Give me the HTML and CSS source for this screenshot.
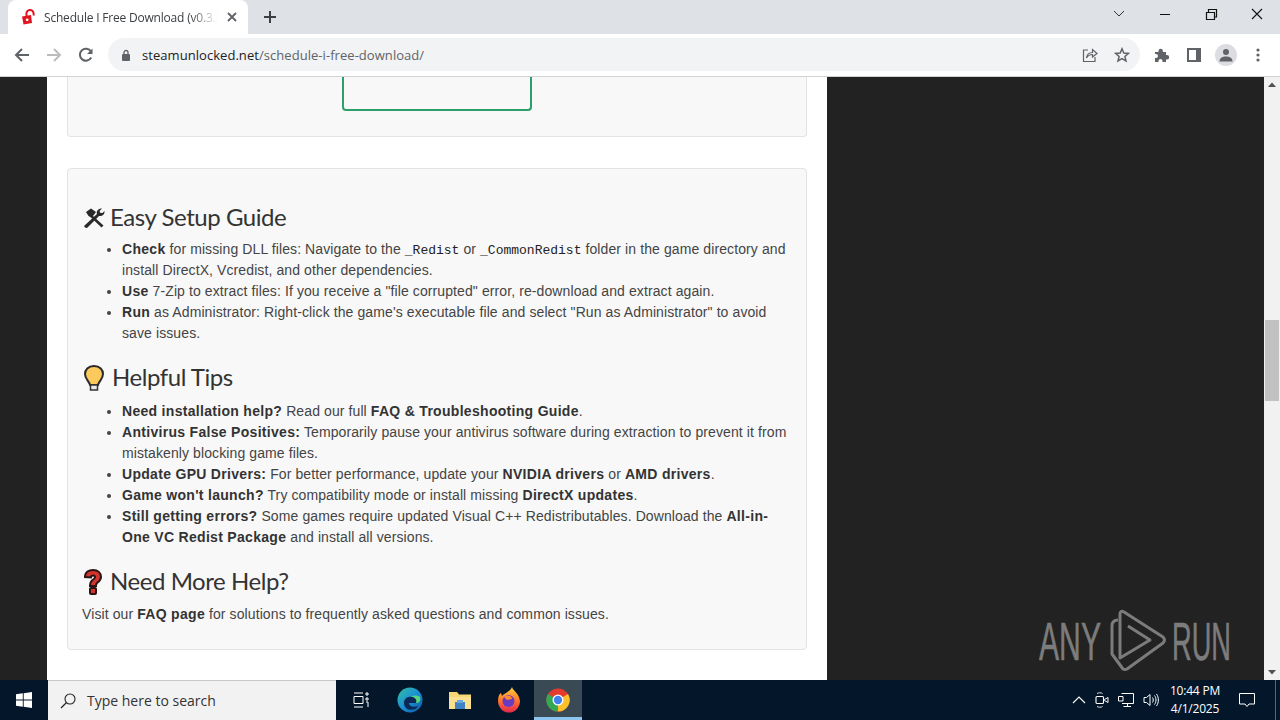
FILE: index.html
```html
<!DOCTYPE html>
<html lang="en">
<head>
<meta charset="utf-8">
<title>Schedule I Free Download</title>
<link rel="stylesheet" href="styles.css">
</head>
<body>
<div class="tabstrip">
  <div class="tab">
    <svg class="favicon" width="16" height="16" viewBox="0 0 16 16"><path d="M1 7.500 L10 6 L11 14 L2.500 15.500 Z" fill="#e0141c"/><path d="M5.500 7 V4.500 a3.500 3.200 0 0 1 7-.5 L12.800 6.500" fill="none" stroke="#e0141c" stroke-width="2"/><circle cx="6.200" cy="10.800" r="1.400" fill="#fff"/></svg>
    <span class="tab-title">Schedule I Free Download (v0.3.3</span>
    <svg class="tab-close" width="10" height="10" viewBox="0 0 10 10"><path d="M1 1 L9 9 M9 1 L1 9" stroke="#5f6368" stroke-width="1.800"/></svg>
  </div>
  <svg class="newtab" width="14" height="14" viewBox="0 0 14 14"><path d="M7 1 V13 M1 7 H13" stroke="#3c4043" stroke-width="2"/></svg>
  <div class="winctrls">
    <svg width="46" height="30" viewBox="0 0 46 30"><path d="M18 11 L23 16 L28 11" fill="none" stroke="#333" stroke-width="1"/></svg>
    <svg width="46" height="30" viewBox="0 0 46 30"><path d="M18 14.500 H28" stroke="#111" stroke-width="1"/></svg>
    <svg width="46" height="30" viewBox="0 0 46 30"><path d="M18.500 12.500 H26.500 V19.500 H18.500 Z M20.500 12 V9.500 H28.500 V17 H27" fill="none" stroke="#111" stroke-width="1.200"/></svg>
    <svg width="46" height="30" viewBox="0 0 46 30"><path d="M18 9 L28 19 M28 9 L18 19" stroke="#111" stroke-width="1.100"/></svg>
  </div>
</div>
<div class="toolbar">
  <svg class="nav" width="16" height="16" viewBox="0 0 16 16"><path d="M15 8 H2 M8 2 L2 8 L8 14" fill="none" stroke="#5f6368" stroke-width="2"/></svg>
  <svg class="nav" width="16" height="16" viewBox="0 0 16 16"><path d="M1 8 H14 M8 2 L14 8 L8 14" fill="none" stroke="#babcbe" stroke-width="2"/></svg>
  <svg class="nav" width="16" height="16" viewBox="0 0 16 16"><path d="M13.200 10.500 A6 6 0 1 1 13 4.500" fill="none" stroke="#5f6368" stroke-width="2"/><path d="M14.500 1.500 V7 H9 Z" fill="#5f6368"/></svg>
  <div class="omnibox">
    <svg class="lock" width="10" height="12" viewBox="0 0 10 12"><rect x="1" y="5" width="8" height="7" rx="1" fill="#5f6368"/><path d="M3 5.500 V3.500 a2 2 0 0 1 4 0 V5.500" fill="none" stroke="#5f6368" stroke-width="1.300"/></svg>
    <span class="url"><span class="host">steamunlocked.net</span>/schedule-i-free-download/</span>
    <svg class="omni-share" width="16" height="16" viewBox="0 0 16 16"><path d="M6 3 H1.500 V14.500 H13 V10" fill="none" stroke="#5f6368" stroke-width="1.200"/><path d="M4.500 11 C5 7 8 5.500 10.500 5.500 V2.500 L15 6.500 L10.500 10 V7.500 C8 7.500 6 8.500 4.500 11 Z" fill="none" stroke="#5f6368" stroke-width="1.200"/></svg>
    <svg class="omni-star" width="16" height="16" viewBox="0 0 16 16"><path d="M8 1.800 L9.800 6 L14.400 6.400 L10.900 9.400 L12 13.900 L8 11.500 L4 13.900 L5.100 9.400 L1.600 6.400 L6.200 6 Z" fill="none" stroke="#5f6368" stroke-width="1.500"/></svg>
  </div>
  <svg class="tool ext" width="16" height="16" viewBox="0 0 16 16"><path d="M1 5 H4.500 V4 a2.200 2.200 0 0 1 4.400 0 V5 H12 V8 H13 a2.200 2.200 0 0 1 0 4.400 H12 V15 H8.500 V14 a2 2 0 0 0-4 0 V15 H1 V11 H2 a2 2 0 0 0 0-4 H1 Z" fill="#5f6368"/></svg>
  <svg class="tool side" width="14" height="14" viewBox="0 0 14 14"><path d="M0 0 H14 V14 H0 Z M2 2 V12 H9 V2 Z" fill="#5f6368" fill-rule="evenodd"/></svg>
  <div class="avatar"><svg width="14" height="14" viewBox="0 0 14 14"><circle cx="7" cy="4" r="3" fill="#5f6368"/><path d="M0.500 13.500 C0.500 9.500 4 8.500 7 8.500 C10 8.500 13.500 9.500 13.500 13.500 Z" fill="#5f6368"/></svg></div>
  <svg class="tool menu" width="4" height="14" viewBox="0 0 4 14"><circle cx="2" cy="2" r="1.600" fill="#5f6368"/><circle cx="2" cy="7" r="1.600" fill="#5f6368"/><circle cx="2" cy="12" r="1.600" fill="#5f6368"/></svg>
</div>
<div class="viewport">
  <main class="page">
    <section class="card card-top"><div class="green-box"></div></section>
    <section class="card card-guide">
      <h3 class="h-setup"><svg class="emoji tools" width="23" height="22" viewBox="0 0 23 22"><path d="M4 5 L9 1.500 L14 5 L11 9 L21.500 18.500 L19.500 20.500 L9 10.500 L6.500 9 Z" fill="#2a2a2a"/><path d="M3 20.500 L2 19 L15 7 C14 4 16 1.500 20 1.500 L17.500 4 L18.500 6 L20.500 6 L22.500 4 C23 7.500 20 9.500 17 9 L5 21 Z" fill="#2a2a2a"/></svg>Easy Setup Guide</h3>
      <ul>
        <li><strong>Check</strong> for missing DLL files: Navigate to the <code>_Redist</code> or <code>_CommonRedist</code> folder in the game directory and install DirectX, Vcredist, and other dependencies.</li>
        <li><strong>Use</strong> 7-Zip to extract files: If you receive a "file corrupted" error, re-download and extract again.</li>
        <li><strong>Run</strong> as Administrator: Right-click the game's executable file and select "Run as Administrator" to avoid save issues.</li>
      </ul>
      <h3 class="h-tips"><svg class="emoji bulb" width="24" height="28" viewBox="0 0 24 28"><path d="M12 2 C6 2 3 6 3 10 C3 15 7 17 8 21 H16 C17 17 21 15 21 10 C21 6 18 2 12 2 Z" fill="#fcc95c" stroke="#2a2a2a" stroke-width="2"/><rect x="8.500" y="21" width="7" height="5" fill="#e8e8e8" stroke="#333" stroke-width="1.500"/></svg>Helpful Tips</h3>
      <ul>
        <li><strong>Need installation help?</strong> Read our full <strong>FAQ &amp; Troubleshooting Guide</strong>.</li>
        <li><strong>Antivirus False Positives:</strong> Temporarily pause your antivirus software during extraction to prevent it from mistakenly blocking game files.</li>
        <li><strong>Update GPU Drivers:</strong> For better performance, update your <strong>NVIDIA drivers</strong> or <strong>AMD drivers</strong>.</li>
        <li><strong>Game won't launch?</strong> Try compatibility mode or install missing <strong>DirectX updates</strong>.</li>
        <li><strong>Still getting errors?</strong> Some games require updated Visual C++ Redistributables. Download the <strong>All-in-One VC Redist Package</strong> and install all versions.</li>
      </ul>
      <h3 class="h-help"><svg class="emoji question" width="22" height="28" viewBox="0 0 22 28"><path d="M3 9 C3 4 7 2 11 2 C16 2 19 5 19 9 C19 12 17 13.500 15 15 C14 16 14 17 14 18 H8 C8 15.500 8.500 13.500 10.500 12 C12 11 13 10.500 13 9 C13 8 12 7.500 11 7.500 C10 7.500 9 8 9 9.500 Z" fill="#d3342c" stroke="#2a1414" stroke-width="2"/><rect x="8" y="20" width="6" height="6" rx="1" fill="#d3342c" stroke="#2a1414" stroke-width="2"/></svg>Need More Help?</h3>
      <p>Visit our <strong>FAQ page</strong> for solutions to frequently asked questions and common issues.</p>
    </section>
  </main>
  <div class="side-dark"></div>
  <div class="scrollbar">
    <svg class="sb-arrow" width="16" height="17" viewBox="0 0 16 17"><path d="M4 10 L8 5.500 L12 10 Z" fill="#505050"/></svg>
    <div class="sb-track"><div class="sb-thumb"></div></div>
    <svg class="sb-arrow" width="16" height="17" viewBox="0 0 16 17"><path d="M4 7 L8 11.500 L12 7 Z" fill="#505050"/></svg>
  </div>
  <svg class="watermark" width="194" height="66" viewBox="0 0 194 66">
    <text x="0" y="52" class="wm-text" textLength="62" lengthAdjust="spacingAndGlyphs">ANY</text>
    <path d="M79 12 Q73 12 73 18 V46 L84 61 Q86 62 88 61 L124 35 Q127 32 124 29 L85 4 Q81 2 81 6 V50 L111 32 L89 18" fill="none" stroke="#7c7c7c" stroke-width="3" stroke-linejoin="round"/>
    <text x="133" y="52" class="wm-text" textLength="59" lengthAdjust="spacingAndGlyphs">RUN</text>
  </svg>
</div>
<div class="taskbar">
  <div class="start"><svg width="16" height="16" viewBox="0 0 16 16"><path d="M0 2.300 L6.800 1.300 V7.500 H0 Z M7.700 1.200 L16 0 V7.500 H7.700 Z M0 8.400 H6.800 V14.700 L0 13.700 Z M7.700 8.400 H16 V16 L7.700 14.800 Z" fill="#fff"/></svg></div>
  <div class="search">
    <svg width="16" height="16" viewBox="0 0 16 16"><circle cx="10" cy="6" r="5" fill="none" stroke="#222" stroke-width="1.100"/><path d="M6.500 9.500 L1 15" stroke="#222" stroke-width="1.300"/></svg>
    <span>Type here to search</span>
  </div>
  <div class="tb-item"><svg width="16" height="16" viewBox="0 0 16 16"><path d="M1 1 H10 M1 15 H10 M1 4.500 H10 V11.500 H1 Z M13 1 H15 V3 H13 Z M13 6 H15 V8 H13 Z M13 10 H15 V15" fill="none" stroke="#fff" stroke-width="1"/></svg></div>
  <div class="tb-item"><svg width="26" height="26" viewBox="0 0 26 26"><defs><linearGradient id="edge" x1="0" y1="0" x2="1" y2="1"><stop offset="0" stop-color="#35c1a0"/><stop offset=".5" stop-color="#1b8fd6"/><stop offset="1" stop-color="#0c59a4"/></linearGradient></defs><circle cx="13" cy="13" r="12.500" fill="url(#edge)"/><path d="M7 16 C7 10 13 8.500 17 10.500 C20 12 20.500 15 19 16 H12 C12 19 16 21 21 19 C18 25 7 24 7 16 Z" fill="#0a2a55"/><path d="M23 10 C24 14 22 16 19 16 C20.500 13 18 10 14 9.500 C17 8 21 8 23 10 Z" fill="#57d57a"/></svg></div>
  <div class="tb-item"><svg width="24" height="22" viewBox="0 0 24 22"><path d="M1 3 H9 L11 5.500 H23 V20 H1 Z" fill="#f8d775"/><path d="M1 8 H23 V20 H1 Z" fill="#fbe08f"/><rect x="7" y="13" width="10" height="7" fill="#3f83c4"/><rect x="9" y="11" width="6" height="3" fill="#6aa9dc"/></svg></div>
  <div class="tb-item"><svg width="24" height="26" viewBox="0 0 24 26"><defs><linearGradient id="fox" x1="0" y1="0" x2="0" y2="1"><stop offset="0" stop-color="#ffd23c"/><stop offset=".5" stop-color="#ff7a2a"/><stop offset="1" stop-color="#e22850"/></linearGradient></defs><path d="M15 0 C16 4 22 6 23 14 A11 11.500 0 1 1 1 14 C1 10 2 7 4 6 L5 9 C7 6 13 5 15 0 Z" fill="url(#fox)"/><circle cx="11.500" cy="14" r="6" fill="#6a3bc0"/><path d="M7 10 C10 7 15 9 15 12 L10 13 Z" fill="#ff8a2a"/></svg></div>
  <div class="tb-item active"><svg width="24" height="24" viewBox="0 0 24 24"><circle cx="12" cy="12" r="11.500" fill="#e33b2e"/><path d="M12 12 L22 6 A11.500 11.500 0 0 1 12 23.500 Z" fill="#fbc02d"/><path d="M12 12 L12 23.500 A11.500 11.500 0 0 1 2 6 Z" fill="#34a853"/><circle cx="12" cy="12" r="5.500" fill="#fff"/><circle cx="12" cy="12" r="4.200" fill="#3f82f0"/></svg></div>
  <div class="tray">
    <svg width="14" height="14" viewBox="0 0 14 14"><path d="M1 10 L7 4 L13 10" fill="none" stroke="#fff" stroke-width="1.100"/></svg>
    <svg width="14" height="16" viewBox="0 0 14 16"><path d="M2 1.500 C3.500 .5 6 .5 7.500 1.500 M2 14.500 C3.500 15.500 6 15.500 7.500 14.500" fill="none" stroke="#ddd" stroke-width="1"/><rect x="1" y="4.500" width="7.500" height="7" rx="1" fill="none" stroke="#fff" stroke-width="1.100"/><path d="M9.500 7.500 L13 5.500 V10.500 L9.500 8.500 Z" fill="none" stroke="#fff"/></svg>
    <svg width="16" height="16" viewBox="0 0 16 16"><path d="M3.500 1.500 H15.500 V11.500 H4 M9.500 11.500 V14.500 M5.500 14.500 H13 M.5 4.500 H5 V9 H.5 Z" fill="none" stroke="#fff" stroke-width="1"/></svg>
    <svg width="16" height="16" viewBox="0 0 16 16"><path d="M1 5.500 H3.500 L7 2.500 V13.500 L3.500 10.500 H1 Z M9.500 5.500 C10.500 7 10.500 9 9.500 10.500 M11.500 3.500 C13.500 6 13.500 10 11.500 12.500 M13.500 2 C16 5.500 16 10.500 13.500 14" fill="none" stroke="#fff" stroke-width="1"/></svg>
  </div>
  <div class="clock"><span>10:44 PM</span><span>4/1/2025</span></div>
  <svg class="notify" width="16" height="16" viewBox="0 0 16 16"><path d="M.5 1.500 H15.500 V12 H10 L8 14.500 L6 12 H.5 Z" fill="none" stroke="#fff" stroke-width="1"/></svg>
  <div class="show-desktop"></div>
</div>
</body>
</html>
```
FILE: styles.css
```css
* { box-sizing: border-box; }
html, body { margin: 0; padding: 0; }
body { width: 1280px; height: 720px; overflow: hidden; display: flex; flex-direction: column; font-family: "Open Sans", "Noto Sans", sans-serif; background: #222; }

.tabstrip { height: 34px; background: #dee1e6; display: flex; align-items: flex-end; padding-left: 8px; flex: none; }
.tab { width: 240px; height: 34px; background: #fff; border-radius: 8px 8px 0 0; display: flex; align-items: center; padding: 0 11px 0 13px; }
.favicon { flex: none; margin-right: 7px; }
.tab-title { flex: 1; font-size: 12px; letter-spacing: -.2px; color: #3c4043; white-space: nowrap; overflow: hidden; -webkit-mask-image: linear-gradient(90deg, #000 84%, transparent 100%); mask-image: linear-gradient(90deg, #000 84%, transparent 100%); }
.tab-close { flex: none; margin-left: 9px; }
.newtab { margin: 0 0 10px 15px; }
.winctrls { margin-left: auto; display: flex; align-self: flex-start; }
.winctrls svg { display: block; }

.toolbar { height: 43px; background: #fff; border-bottom: 1px solid #d0d2d5; display: flex; align-items: center; padding: 0 0 1px 14px; flex: none; }
.nav { margin-right: 16px; flex: none; }
.omnibox { width: 1032px; margin-left: -2px; margin-right: 14px; height: 33px; border-radius: 17px; background: #f1f3f4; display: flex; align-items: center; padding: 0 10px 0 13px; flex: none; }
.lock { flex: none; margin-right: 11px; }
.url { flex: 1; font-size: 13px; color: #5f6368; letter-spacing: .05px; white-space: nowrap; }
.host { color: #202124; }
.omni-share { margin-right: 16px; }
.tool { flex: none; }
.ext { margin-left: 0; }
.side { margin-left: 17px; }
.avatar { width: 22px; height: 22px; border-radius: 50%; background: #dcdde2; display: flex; align-items: center; justify-content: center; margin-left: 14px; flex: none; }
.menu { margin-left: 19px; }

.viewport { position: relative; flex: 1; min-height: 0; display: flex; background: #222; padding-left: 47px; }
.page { width: 780px; background: #fff; padding: 0 20px; flex: none; overflow: hidden; }
.side-dark { flex: 1; }
.scrollbar { width: 16px; background: #f1f1f1; display: flex; flex-direction: column; flex: none; }
.sb-arrow { flex: none; display: block; }
.sb-track { flex: 1; padding-top: 226px; }
.sb-thumb { height: 81px; background: #c1c1c1; margin: 0 1px; }

.card { background: #f8f8f8; border: 1px solid #e3e3e3; border-radius: 4px; }
.card-top { height: 60px; border-top: 0; border-radius: 0 0 4px 4px; margin-bottom: 31px; display: flex; justify-content: center; }
.green-box { width: 190px; height: 34px; border: 2px solid #2e9e6b; border-top: 0; border-radius: 0 0 4px 4px; margin-left: -1px; }
.card-guide { padding: 15px 14px 15px; height: 482px; font-family: "Liberation Sans", Arial, sans-serif; font-size: 14px; line-height: 21px; color: #444; letter-spacing: .1px; }
h3 { font-family: Lato, Roboto, sans-serif; font-weight: 400; font-size: 24px; line-height: 26px; margin: 20px 0 7px; padding-bottom: 2px; color: #333; letter-spacing: -.45px; display: flex; align-items: center; }
.h-tips { height: 28px; margin-bottom: 9px; }
.h-help { height: 28px; margin-bottom: 8px; }
.emoji { flex: none; margin-right: 6px; margin-bottom: -2px; }
.tools { margin-right: 5px; }
ul { margin: 0 0 10px; padding-left: 40px; }
p { margin: 0 0 10px; }
strong { color: #333; font-weight: 700; letter-spacing: .3px; }
code { font-family: "Liberation Mono", monospace; font-size: 13px; line-height: 1; letter-spacing: 0; color: #222; }

.watermark { position: absolute; left: 1039px; top: 531px; }
.wm-text { font-family: "Liberation Sans", Arial, sans-serif; font-size: 54px; fill: #7c7c7c; stroke: #7c7c7c; stroke-width: .6px; }

.taskbar { height: 40px; background: #04172a; display: flex; align-items: center; flex: none; color: #fff; }
.start { width: 48px; height: 40px; display: flex; align-items: center; justify-content: center; flex: none; }
.search { width: 288px; height: 40px; background: #f2f2f2; border: 1px solid #c8c8c8; border-width: 1px 0 0; display: flex; align-items: center; gap: 11px; padding-left: 12px; flex: none; color: #333; font-size: 14px; }
.tb-item { width: 49.5px; height: 40px; display: flex; align-items: center; justify-content: center; flex: none; }
.tb-item.active { width: 48px; background: #3a4a55; border-bottom: 3px solid #8cc6f0; padding-top: 3px; }
.tray { display: flex; align-items: center; gap: 9px; margin-left: auto; }
.clock { width: 64px; margin-left: 4px; display: flex; flex-direction: column; align-items: center; font-size: 12px; letter-spacing: -.2px; line-height: 18px; color: #fff; }
.notify { margin-left: 12px; }
.show-desktop { width: 1px; height: 40px; background: #5a6672; margin-left: 20px; margin-right: 4px; }
```
